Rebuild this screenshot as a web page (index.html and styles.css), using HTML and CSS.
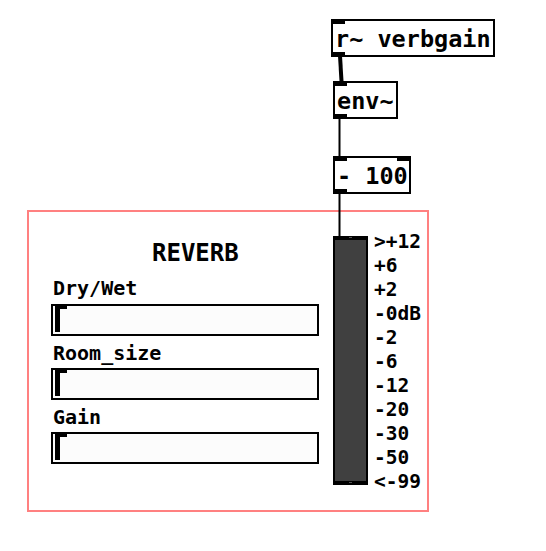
FILE: index.html
```html
<!DOCTYPE html>
<html>
<head>
<meta charset="utf-8">
<link rel="stylesheet" href="styles.css">
</head>
<body>
<div class="patch">
  <div class="cnv"></div>
  <svg class="wires" width="546" height="551" viewBox="0 0 546 551">
    <line x1="340" y1="56" x2="341.5" y2="81" stroke="#000" stroke-width="4"/>
    <line x1="339.5" y1="119" x2="339.5" y2="156" stroke="#000" stroke-width="2"/>
    <line x1="339.5" y1="194" x2="339.5" y2="237" stroke="#000" stroke-width="2"/>
  </svg>

  <div class="obj obj-recv"><span class="iolet in-l"></span><span class="iolet out-l"></span>r~ verbgain</div>
  <div class="obj obj-env"><span class="iolet in-l"></span><span class="iolet out-l"></span>env~</div>
  <div class="obj obj-sub"><span class="iolet in-l"></span><span class="iolet in-r"></span><span class="iolet out-l"></span>- 100</div>

  <div class="title">REVERB</div>

  <div class="lbl lbl-dry">Dry/Wet</div>
  <div class="hsl hsl-dry"><span class="hsl-in"></span><span class="knob"></span></div>
  <div class="lbl lbl-room">Room_size</div>
  <div class="hsl hsl-room"><span class="hsl-in"></span><span class="knob"></span></div>
  <div class="lbl lbl-gain">Gain</div>
  <div class="hsl hsl-gain"><span class="hsl-in"></span><span class="knob"></span></div>

  <div class="vu"><span class="vu-mark top"></span><span class="vu-mark bot"></span></div>
  <ul class="vu-scale">
    <li>&gt;+12</li>
    <li>+6</li>
    <li>+2</li>
    <li>-0dB</li>
    <li>-2</li>
    <li>-6</li>
    <li>-12</li>
    <li>-20</li>
    <li>-30</li>
    <li>-50</li>
    <li>&lt;-99</li>
  </ul>
</div>
</body>
</html>
```
FILE: styles.css
```css
html, body {
  margin: 0;
  padding: 0;
  background: #fff;
}
.patch {
  position: relative;
  width: 546px;
  height: 551px;
  overflow: hidden;
  font-family: "DejaVu Sans Mono", monospace;
  font-weight: bold;
  color: #000;
}
.wires {
  position: absolute;
  left: 0;
  top: 0;
}
.cnv {
  position: absolute;
  left: 27px;
  top: 210px;
  width: 398px;
  height: 298px;
  border: 2px solid #ff8080;
}
.obj {
  position: absolute;
  box-sizing: border-box;
  height: 38px;
  border: 2px solid #000;
  background: #fff;
  padding-left: 2px;
  font-size: 23.5px;
  line-height: 36px;
  white-space: pre;
}
.obj-recv { left: 331px; top: 19px; width: 164px; }
.obj-env { left: 333px; top: 81px; width: 65px; }
.obj-sub { left: 333px; top: 156px; width: 78px; }
.iolet {
  position: absolute;
  width: 14px;
  height: 5px;
  background: #000;
}
.in-l { left: -2px; top: -2px; }
.in-r { right: -2px; top: -2px; }
.out-l { left: -2px; bottom: -2px; }

.title {
  position: absolute;
  left: 152px;
  top: 241px;
  font-size: 24px;
  line-height: 24px;
}
.lbl {
  position: absolute;
  left: 53px;
  font-size: 20px;
  line-height: 22px;
}
.lbl-dry { top: 277px; }
.lbl-room { top: 342px; }
.lbl-gain { top: 406px; }

.hsl {
  position: absolute;
  left: 51px;
  width: 264px;
  height: 28px;
  border: 2px solid #000;
  background: #fcfcfc;
}
.hsl-dry { top: 304px; }
.hsl-room { top: 368px; }
.hsl-gain { top: 432px; }
.hsl-in {
  position: absolute;
  left: 2px;
  top: 0;
  width: 12px;
  height: 3px;
  background: #000;
}
.knob {
  position: absolute;
  left: 2px;
  top: 0;
  width: 5px;
  height: 26px;
  background: #000;
}

.vu {
  position: absolute;
  left: 333px;
  top: 236px;
  width: 31px;
  height: 241px;
  border-style: solid;
  border-color: #000;
  border-width: 4px 2px;
  background: #404040;
}
.vu-mark {
  position: absolute;
  left: 14px;
  width: 3px;
  height: 1px;
  background: #555;
}
.vu-mark.top { top: -3px; }
.vu-mark.bot { bottom: -2px; }

.vu-scale {
  position: absolute;
  left: 374px;
  top: 230px;
  margin: 0;
  padding: 0;
  list-style: none;
  font-size: 19.5px;
  line-height: 24px;
}
```
